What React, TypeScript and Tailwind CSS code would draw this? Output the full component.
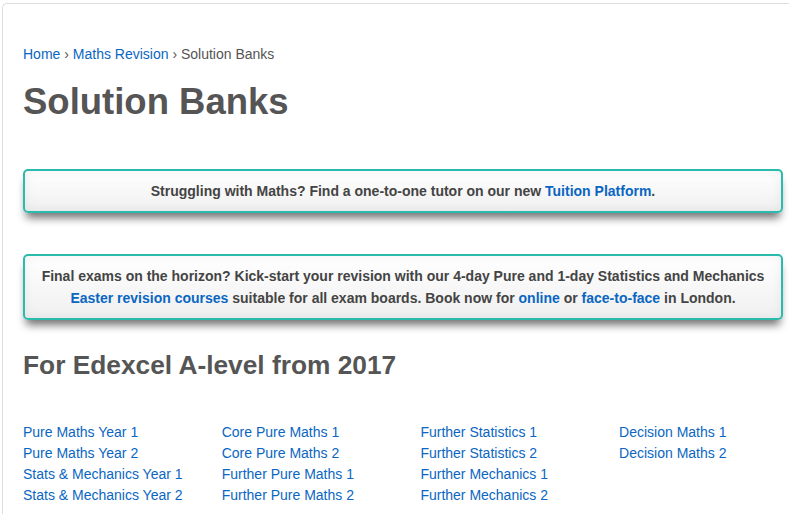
const links = [
  ['Pure Maths Year 1', 'Pure Maths Year 2', 'Stats & Mechanics Year 1', 'Stats & Mechanics Year 2'],
  ['Core Pure Maths 1', 'Core Pure Maths 2', 'Further Pure Maths 1', 'Further Pure Maths 2'],
  ['Further Statistics 1', 'Further Statistics 2', 'Further Mechanics 1', 'Further Mechanics 2'],
  ['Decision Maths 1', 'Decision Maths 2'],
];

function Callout({ children }: { children: React.ReactNode }) {
  return (
    <div className="rounded-[5px] border-2 border-[#2bbbad] bg-gradient-to-b from-white to-[#f0f0f0] px-4 py-[9px] text-center text-[14px] font-bold leading-[22px] text-[#444] shadow-[0_8px_8px_-3px_rgba(0,0,0,0.55),inset_0_0_12px_rgba(0,0,0,0.06)]">
      {children}
    </div>
  );
}

export default function App() {
  return (
    <div className="min-h-[514px] overflow-hidden bg-white pl-[2px] pt-[3px] font-['Liberation_Sans',Arial,sans-serif]">
      <div className="min-h-[511px] rounded-tl-[5px] border-l border-t border-[#ddd] pl-[20px] pr-[6px] pt-[40px]">
        {/* breadcrumb */}
        <div className="text-[14px] leading-[20px] text-[#555]">
          <a className="text-[#0a66c2]">Home</a> › <a className="text-[#0a66c2]">Maths Revision</a> › Solution Banks
        </div>
        <h1 className="mt-[18px] text-[36.5px] font-bold leading-[40px] text-[#555]">Solution Banks</h1>

        <div className="mt-[47px]">
          <Callout>
            Struggling with Maths? Find a one-to-one tutor on our new{' '}
            <a className="text-[#0a66c2]">Tuition Platform</a>.
          </Callout>
        </div>

        <div className="mt-[41px]">
          <Callout>
            Final exams on the horizon? Kick-start your revision with our 4-day Pure and 1-day Statistics and Mechanics{' '}
            <a className="text-[#0a66c2]">Easter revision courses</a> suitable for all exam boards. Book now for{' '}
            <a className="text-[#0a66c2]">online</a> or <a className="text-[#0a66c2]">face-to-face</a> in London.
          </Callout>
        </div>

        <h2 className="mt-[29px] text-[26.3px] font-bold leading-[32px] text-[#555]">For Edexcel A-level from 2017</h2>

        <div className="mt-[41px] grid w-[800px] grid-cols-[repeat(4,198.7px)]">
          {links.map((col, i) => (
            <div key={i} className="flex flex-col">
              {col.map((l) => (
                <a key={l} className="text-[14px] leading-[21px] text-[#0a66c2]">
                  {l}
                </a>
              ))}
            </div>
          ))}
        </div>
      </div>
    </div>
  );
}
